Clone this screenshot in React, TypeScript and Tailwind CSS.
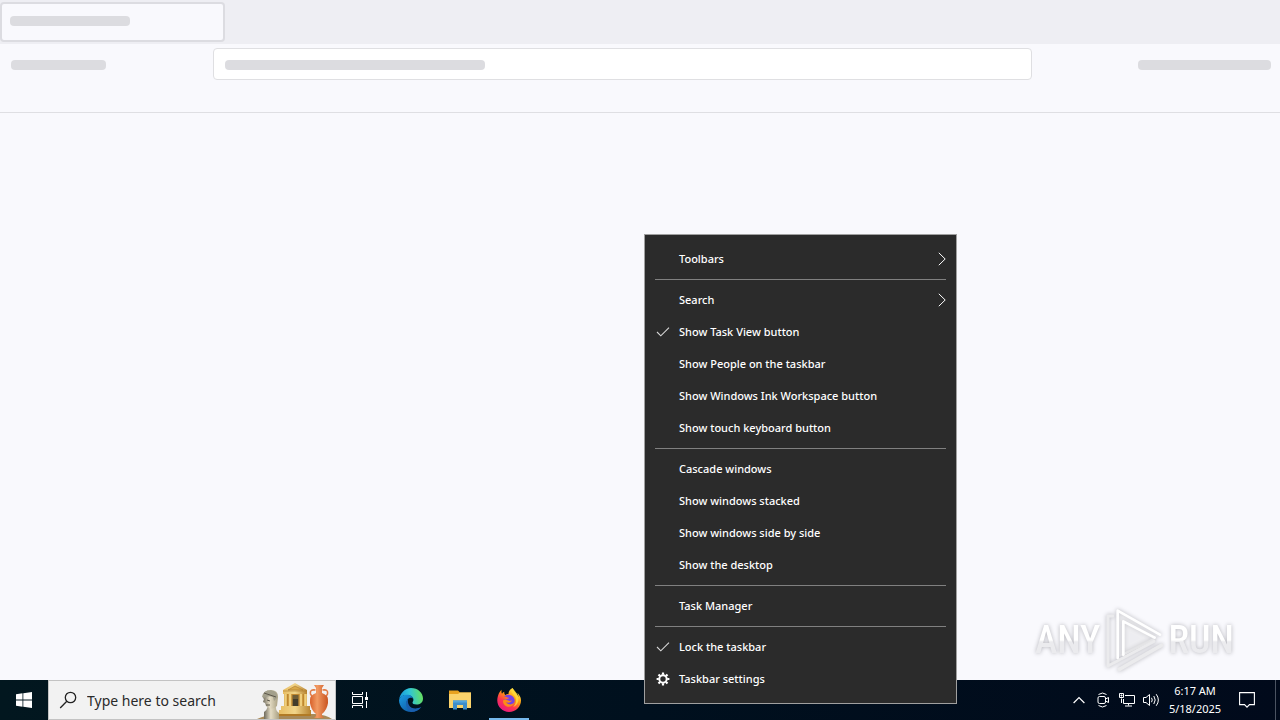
import React from "react";

type MenuEntry =
  | { kind: "separator" }
  | { kind: "item"; label: string; icon?: "check" | "gear"; submenu?: boolean };

const entries: MenuEntry[] = [
  { kind: "item", label: "Toolbars", submenu: true },
  { kind: "separator" },
  { kind: "item", label: "Search", submenu: true },
  { kind: "item", label: "Show Task View button", icon: "check" },
  { kind: "item", label: "Show People on the taskbar" },
  { kind: "item", label: "Show Windows Ink Workspace button" },
  { kind: "item", label: "Show touch keyboard button" },
  { kind: "separator" },
  { kind: "item", label: "Cascade windows" },
  { kind: "item", label: "Show windows stacked" },
  { kind: "item", label: "Show windows side by side" },
  { kind: "item", label: "Show the desktop" },
  { kind: "separator" },
  { kind: "item", label: "Task Manager" },
  { kind: "separator" },
  { kind: "item", label: "Lock the taskbar", icon: "check" },
  { kind: "item", label: "Taskbar settings", icon: "gear" },
];

function CheckIcon() {
  return (
    <svg viewBox="0 0 14 14" className="size-3.5" fill="none" stroke="#d8d8d8" strokeWidth="1.1" aria-hidden="true">
      <path d="M1 7 4.800 10.800 13 2.600" />
    </svg>
  );
}

function GearIcon() {
  return (
    <svg viewBox="0 0 14 14" className="size-3.5" fill="none" stroke="#fff" aria-hidden="true">
      <circle cx="7" cy="7" r="3.700" strokeWidth="2" />
      <path
        d="M7 .6v2.200M7 11.200v2.200M.6 7h2.200M11.200 7h2.200M2.500 2.500 4 4M11.500 2.500 10 4M2.500 11.500 4 10M11.500 11.500 10 10"
        strokeWidth="2.200"
      />
    </svg>
  );
}

function ContextMenu() {
  return (
    <div
      role="menu"
      aria-label="Taskbar"
      className="absolute bottom-4 left-[644px] w-[313px] border border-[#a0a0a0] bg-[#2b2b2b] py-2 text-[11px] font-medium text-white"
    >
      {entries.map((entry, i) =>
        entry.kind === "separator" ? (
          <div key={i} role="separator" className="mx-2.5 my-1 h-px bg-[#808080]" />
        ) : (
          <button key={i} type="button" role="menuitem" className="flex h-8 w-full items-center pr-2.5 pl-[11px] text-left">
            <span className="flex w-[23px] shrink-0">
              {entry.icon === "check" && <CheckIcon />}
              {entry.icon === "gear" && <GearIcon />}
            </span>
            <span className="grow whitespace-nowrap">{entry.label}</span>
            {entry.submenu && (
              <svg viewBox="0 0 8 14" className="h-3.5 w-2" fill="none" stroke="#fff" strokeWidth="1" aria-hidden="true">
                <path d="M.8.8 7.200 7 .8 13.200" />
              </svg>
            )}
          </button>
        ),
      )}
    </div>
  );
}

function Watermark() {
  return (
    <div className="absolute right-[46px] bottom-[46px] flex items-center gap-1 font-['Roboto_Condensed','Roboto',sans-serif] text-[38px] leading-none font-medium drop-shadow-[0_0_2px_#b4b4ba]">
      <span className="bg-linear-to-b from-white from-50% to-[#ebebee] to-55% bg-clip-text text-transparent">ANY</span>
      <svg viewBox="262 18 180 204" className="h-[68px] w-[60px]" fill="none" strokeLinecap="round" strokeLinejoin="round" aria-hidden="true">
        <path d="M302 170V32L428 105 310 170" fill="#fff" fillOpacity=".25" />
        <path d="M318 164 410 118" stroke="#e4e4e6" strokeWidth="8" />
        <path d="M288 48H274V198L412 124" stroke="#ebebed" strokeWidth="9" />
        <path d="M308 208 434 136" stroke="#ebebed" strokeWidth="11" />
        <path d="M303 174V32L430 104M320 164V64L414 113" stroke="#fff" strokeWidth="8" />
      </svg>
      <span className="bg-linear-to-b from-white from-50% to-[#ebebee] to-55% bg-clip-text text-transparent">RUN</span>
    </div>
  );
}

function SearchArt() {
  return (
    <svg viewBox="0 0 80 38" className="h-[38px] w-20 shrink-0" aria-hidden="true">
      <defs>
        <linearGradient id="stone" x1="0" x2="1">
          <stop offset="0" stopColor="#6f6a5c" />
          <stop offset=".45" stopColor="#e4dcc4" />
          <stop offset="1" stopColor="#aaa183" />
        </linearGradient>
        <linearGradient id="gold" x1="0" x2="1">
          <stop offset="0" stopColor="#e8bd62" />
          <stop offset=".5" stopColor="#f1d58a" />
          <stop offset="1" stopColor="#b78330" />
        </linearGradient>
        <linearGradient id="clay" x1="0" x2="1">
          <stop offset="0" stopColor="#d8602a" />
          <stop offset=".4" stopColor="#f19a62" />
          <stop offset="1" stopColor="#c9531f" />
        </linearGradient>
      </defs>
      <path d="M2 38Q10 34 24 33H60Q72 34 77 38Z" fill="#a98a58" />
      <path d="M9 38V31q3-2 4-6l8-1q-1 5 3 8v6Z" fill="url(#stone)" />
      <path d="M8 17q0-8 8-8 7 0 7 7l-1 9q-4 4-8 2l-3-2-1-3-2-1 1-3Z" fill="url(#stone)" />
      <path d="M7 16q1-7 9-7 7 1 6 8l-3 3-1-4q-5-2-9 1Z" fill="#a3a08c" />
      <path d="m9 12 12 4M12 19l3 1M11 24h4" stroke="#5d584b" fill="none" />
      <path d="M26 25h29v5H26Zm-2 4h32v6H24Z" fill="url(#gold)" />
      <path d="M24 33h32v2H24Z" fill="#b17a25" />
      <path d="M29 12h23v13H29Z" fill="#c0882f" />
      <path d="m40 2 12 7v4H28V9Z" fill="url(#gold)" />
      <path d="M28 10h24M33 9l7-4 8 4Z" stroke="#ad782e" strokeWidth=".6" fill="#d9a949" />
      <path d="M30.500 13v12M35 13v12M46 13v12M50.500 13v12" stroke="#f0cf7d" strokeWidth="2.500" />
      <path d="M37.500 14h6v11h-6Z" fill="#6f5d36" />
      <path d="M38 18h5v7h-5Z" fill="#423c2b" />
      <path d="M60.500 9q-6-1-5 4 1 3 4 4M67.500 9q6-1 5 4-1 3-4 4" stroke="#e07a45" strokeWidth="1.600" fill="none" />
      <path d="M59 4h10l-2 3v5q7 2 6 10-1 7-6 11v2l2 2H59l2-2v-2q-5-4-6-11-1-8 6-10V7Z" fill="url(#clay)" />
    </svg>
  );
}

function EdgeIcon() {
  return (
    <svg viewBox="0 0 24 24" className="size-6" aria-hidden="true">
      <defs>
        <linearGradient id="edgeTop" x1="0" y1="0.5" x2="1" y2="0.4">
          <stop offset="0" stopColor="#1695d9" />
          <stop offset=".45" stopColor="#2fc4d8" />
          <stop offset="1" stopColor="#68e25c" />
        </linearGradient>
        <linearGradient id="edgeLow" x1="0" y1="0" x2="1" y2="1">
          <stop offset="0" stopColor="#1b9de2" />
          <stop offset="1" stopColor="#0c4795" />
        </linearGradient>
      </defs>
      <path d="M0 12C1 5 6 0 12 0c7 0 12 5 12 10.500 0 4-3 6-6.500 6-3 0-4-1-4-2 0-.8.900-1 .900-2.700C14.400 9 11.500 7 8 7 4 7 1 9 0 12Z" fill="url(#edgeTop)" />
      <path d="M0 12c1-3.500 4-5.300 8-5.300 3.500 0 6 2 6.400 4.500C13.500 9.800 12 9.500 10.500 10c-3 1-3.500 5-1.500 8 2.500 3.500 8 4 13 1.200C20 22 16.500 24 12 24 5 24 0 18.500 0 12Z" fill="url(#edgeLow)" />
      <path d="M9.200 10.700C6 13 6 20 12 23.900 16.500 24 20 22 22.300 19 17 21.500 12 20.500 10.200 17.500 8.700 15 8.600 12.500 9.200 10.700Z" fill="#1a5fae" />
    </svg>
  );
}

function FolderIcon() {
  return (
    <svg viewBox="0 0 24 20" className="h-5 w-6" aria-hidden="true">
      <path d="M1 .5h9l2 2h11V7H1Z" fill="#e8a21f" />
      <path d="M1 4h9l2-1.500h11V18H1Z" fill="#fbd36b" />
      <path d="M5 10.500h14v9h-4v-4.500h-6v4.500H5Z" fill="#3f8dc9" />
      <path d="M5 10.500h14v2h-14Z" fill="#56a6dc" />
    </svg>
  );
}

function FirefoxIcon() {
  return (
    <svg viewBox="0 0 24 24" className="size-6" aria-hidden="true">
      <defs>
        <linearGradient id="flame" x1=".85" y1="0" x2=".2" y2="1">
          <stop offset=".05" stopColor="#fff44f" />
          <stop offset=".4" stopColor="#ff980e" />
          <stop offset=".65" stopColor="#ff3750" />
          <stop offset="1" stopColor="#e31587" />
        </linearGradient>
      </defs>
      <path d="M23 8.500c-.600-1.500-1.800-3-2.700-3.500.8 1.500 1.200 3 1.200 4C20 5.500 17 4 15.500 0c-3 1.500-4 4-4 6-1.500 0-2.500.5-3.200 1-.7-.5-1.300-1.800-1-3.200-1 .4-1.800 1.200-2.300 2-.7-1-.6-3.400-.4-4C2.500 3.500.500 7.500.300 12 0 18.500 5.500 24 12 24c7 0 12-5.500 12-11.500 0-1.500-.4-3-1-4Z" fill="url(#flame)" />
      <path d="M7 8.500c2-2 5-2.500 7.500-1 3 1.500 4 5 2.500 7.500-1.500 3-6 4-9 1.500-1.500-1.200-2-3-1.800-4.500 1-1 2.300-1 3.300-.5 1.300-.5 2.500-1 2.500-1.700-2 0-2.500-1.800-5-1.300Z" fill="#7542e5" />
      <path d="M6.300 12c1.800-1.300 3.300-.2 5 .6 1.300.6 2.600.2 3.700-.3-.8 2.200-4 3.200-6 1.700 1.500 3 6 3.300 8 .5C16 19 11 20 8 17.500c-2-1.700-2.300-4-1.700-5.500Z" fill="#ff8a16" />
      <path d="M15.500 0c2.500 3.500 6 6 6 11 0 4-2.500 7-5.500 8 3-2.500 4-7 2-10.500C16.500 6 12.500 4 15.500 0Z" fill="#ffd83a" fillOpacity=".85" />
    </svg>
  );
}

function Taskbar() {
  return (
    <footer className="flex h-10 shrink-0 bg-linear-to-r from-[#02171f] via-[#00101e] to-[#010a1b] text-white">
      <button type="button" aria-label="Start" className="flex w-12 shrink-0 items-center justify-center">
        <svg viewBox="0 0 16 16" className="size-4" fill="#fff" aria-hidden="true">
          <path d="M0 2.200 6.500 1.300v6.200H0ZM7.300 1.200 16 0v7.500H7.300ZM0 8.400h6.500v6.300L0 13.800ZM7.300 8.400H16V16l-8.700-1.200Z" />
        </svg>
      </button>
      <label className="flex w-72 shrink-0 items-center overflow-hidden border border-[#c3c3c3] bg-[#f2f2f2] pl-2.5">
        <svg viewBox="0 0 18 18" className="mr-2.5 size-[18px] shrink-0" fill="none" stroke="#222" strokeWidth="1.300" aria-hidden="true">
          <circle cx="11.500" cy="6.500" r="5.200" />
          <path d="M7.800 10.300 1.200 17" />
        </svg>
        <input
          type="text"
          aria-label="Search"
          placeholder="Type here to search"
          className="w-0 grow bg-transparent pt-px text-sm text-[#2a2a2a] outline-none placeholder:text-[#2a2a2a]"
        />
        <SearchArt />
      </label>
      <button type="button" aria-label="Task View" className="flex w-12 shrink-0 items-center justify-center">
        <svg viewBox="0 0 16 16" className="size-4" fill="none" stroke="#fff" aria-hidden="true">
          <path d="M.5 0v2.500h10V0M.5 16v-2.500h10V16M.5 4.500h10v7H.5ZM14.500 0v5M14.500 9v7" />
          <path d="M13 5h3v3h-3Z" fill="#fff" stroke="none" />
        </svg>
      </button>
      <div className="flex pl-0.5">
        <button type="button" aria-label="Microsoft Edge" className="flex w-[50px] items-center justify-center">
          <EdgeIcon />
        </button>
        <button type="button" aria-label="File Explorer" className="flex w-12 items-center justify-center">
          <FolderIcon />
        </button>
        <button type="button" aria-label="Firefox" className="flex w-[50px] flex-col items-center">
          <span className="flex grow items-center pt-0.5">
            <FirefoxIcon />
          </span>
          <span className="h-0.5 w-10 bg-[#76b9ed]" />
        </button>
      </div>
      <div className="ml-auto flex items-center">
        <button type="button" aria-label="Show hidden icons" className="flex w-6 justify-center">
          <svg viewBox="0 0 12 8" className="h-2 w-3" fill="none" stroke="#fff" strokeWidth="1.200" aria-hidden="true">
            <path d="M.6 7 6 1.500 11.400 7" />
          </svg>
        </button>
        <button type="button" aria-label="Meet Now" className="flex w-6 justify-center">
          <svg viewBox="0 0 12 16" className="h-4 w-3" fill="none" stroke="#fff" aria-hidden="true">
            <rect x="1" y="4.500" width="7.500" height="7" rx="1.500" />
            <path d="M8.500 7 11.500 5.500v5L8.500 9M1.500 2.500q4-3 8 0M1.500 13.500q4 3 8 0" />
          </svg>
        </button>
        <button type="button" aria-label="Network" className="flex w-6 justify-center">
          <svg viewBox="0 0 16 14" className="h-3.5 w-4" fill="none" stroke="#fff" aria-hidden="true">
            <path d="M6 2.500h9.500v8H4.500V6M9.500 10.500v2M6 13h7M2.500 5.500V10" />
            <path d="M.5.500h4v4h-4Z" />
            <path d="M2 2h1v1H2Z" fill="#fff" />
          </svg>
        </button>
        <button type="button" aria-label="Volume" className="flex w-6 justify-center">
          <svg viewBox="0 0 17 14" className="h-3.5 w-[17px]" fill="none" stroke="#fff" aria-hidden="true">
            <path d="M.5 4.500h2.500L6.500 1.500v11L3 9.500H.5ZM8.500 4.800q1.500 2.200 0 4.400M10.800 3q2.800 4 0 8M13.200 1.200q4.300 5.800 0 11.600" />
          </svg>
        </button>
        <button type="button" className="w-16 text-center text-[11px] leading-[18px]">
          <span className="block">6:17 AM</span>
          <span className="block">5/18/2025</span>
        </button>
        <button type="button" aria-label="Notifications" className="flex w-10 justify-center">
          <svg viewBox="0 0 16 16" className="size-4" fill="none" stroke="#fff" strokeWidth="1.100" aria-hidden="true">
            <path d="M.6.6h14.800v12H10.500L8 15.200 5.500 12.600H.6Z" />
          </svg>
        </button>
        <button type="button" aria-label="Show desktop" className="ml-2 h-10 w-[5px] border-l border-[#4b5361]" />
      </div>
    </footer>
  );
}

export default function App() {
  return (
    <div className="relative flex min-h-screen flex-col bg-[#f9f9fd] font-['Noto_Sans','Open_Sans',sans-serif]">
      <header>
        <div className="h-11 bg-[#eeeef3] pt-0.5">
          <div className="flex h-10 w-[225px] items-start rounded-sm border-2 border-[#dcdce1] bg-[#f9f9fd] px-2 pt-3">
            <div className="h-2.5 w-[120px] rounded bg-[#dcdce0]" />
          </div>
        </div>
        <div className="flex h-[69px] items-start border-b border-[#dfdfe3] pt-1">
          <div className="flex h-8 w-[213px] shrink-0 items-center pt-0.5 pl-[11px]">
            <div className="h-2.5 w-[95px] rounded bg-[#dcdce0]" />
          </div>
          <div className="flex h-8 grow items-center rounded border border-[#dfdfe2] bg-white px-[11px] pt-0.5">
            <div className="h-2.5 w-[260px] rounded bg-[#dcdce0]" />
          </div>
          <div className="flex h-8 w-[248px] shrink-0 items-center justify-end pt-0.5 pr-[9px]">
            <div className="h-2.5 w-[133px] rounded bg-[#dcdce0]" />
          </div>
        </div>
      </header>
      <main className="grow" />
      <Watermark />
      <Taskbar />
      <ContextMenu />
    </div>
  );
}
